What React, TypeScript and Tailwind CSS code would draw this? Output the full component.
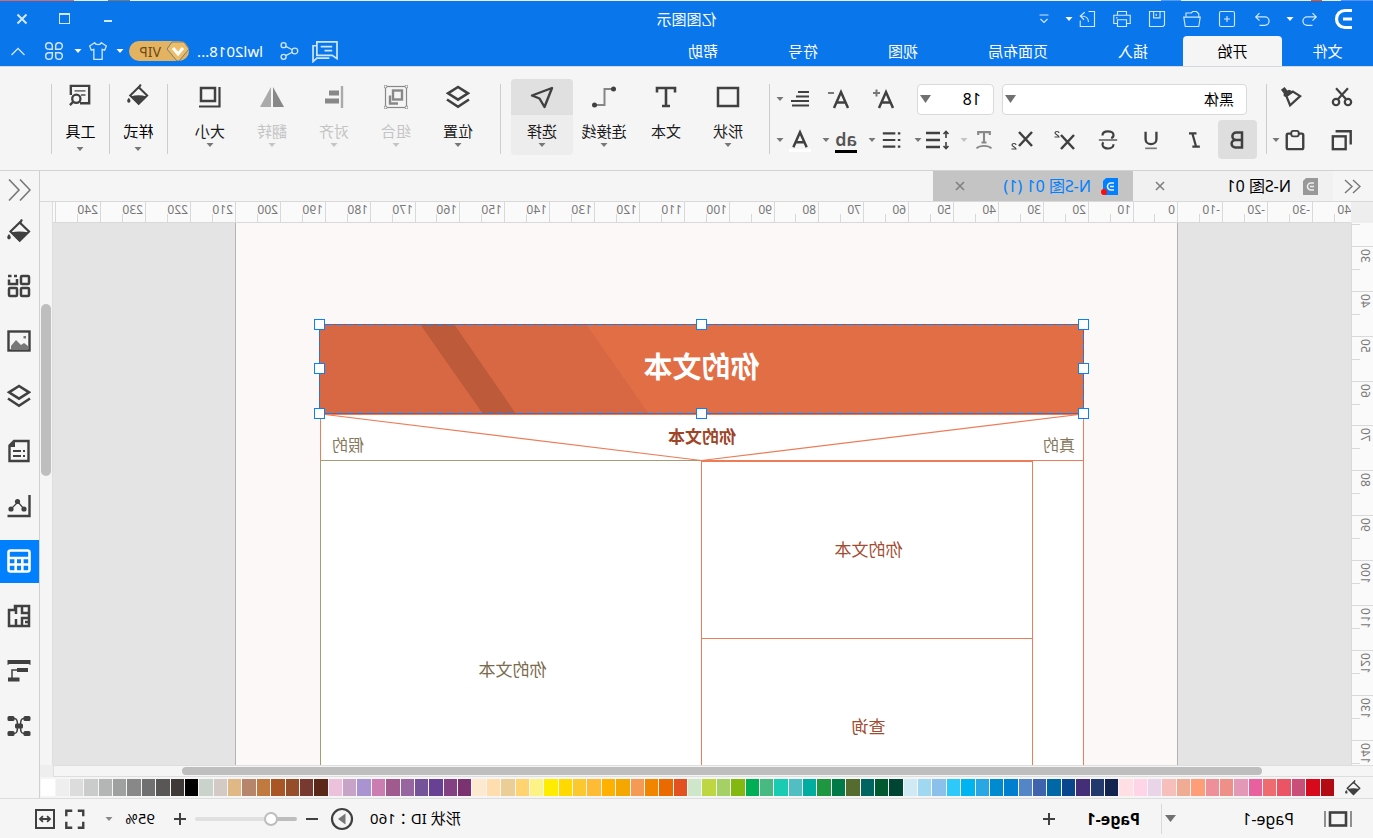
import type { ReactNode } from 'react'
import clsx from 'clsx'

type IconProps = {
  size?: number
  className?: string
  children: ReactNode
}

function Icon({ size = 24, className, children }: IconProps) {
  return (
    <svg
      width={size}
      height={size}
      viewBox="0 0 24 24"
      fill="none"
      stroke="currentColor"
      strokeWidth="2"
      className={clsx('shrink-0', className)}
      aria-hidden="true"
    >
      {children}
    </svg>
  )
}

function Caret({ className }: { className?: string }) {
  return (
    <svg width="8" height="4" viewBox="0 0 8 4" className={clsx('shrink-0', className)} aria-hidden="true">
      <path d="M0.500 0h7L4 4z" fill="currentColor" />
    </svg>
  )
}

const bucket = (
  <>
    <path d="M11.300 3.500 20.500 12.500l-9.200 9.200L2 12.500z" strokeWidth="2.200" />
    <path d="M2.500 13.500c6-1.500 12-1.500 17.500 0l-8.700 9z" fill="currentColor" stroke="none" />
    <path d="M11.500 5 9 0.500" strokeWidth="2.200" />
    <path d="M22 15c1.200 1.600 1.800 2.600 1.800 3.600a1.800 1.800 0 0 1-3.600 0c0-1 .6-2 1.800-3.600z" fill="currentColor" stroke="none" />
  </>
)

const layers = (
  <>
    <path d="m12 2 10 6.300-10 6.300L2 8.300z" strokeWidth="2.600" />
    <path d="m1 14.500 11 7.300 11-7.300" strokeWidth="2.600" />
  </>
)

const quickActions = [
  { label: '重做', icon: <path d="M4.500 9.500h11a5 5 0 0 1 0 10H9M9 5 4.500 9.500 9 14" />, flip: true },
  { label: '新建', icon: <><rect x="2" y="2" width="20" height="20" rx="2" /><path d="M12 8v8M8 12h8" /></> },
  { label: '打开', icon: <><path d="M3 10V5l3-3h5l2 2h7v5" /><path d="M1 9.500h22l-2 12.500H3z" /></> },
  { label: '保存', icon: <><path d="M2 2h20v20H4l-2-2z" /><path d="M8 2v8.500h8.500V2M13 5v3" /></> },
  { label: '打印', icon: <><path d="M6 7V2h12v5M6 18H1V7h22v11h-5" /><path d="M6 13h12v9H6zM18 10.500h2" /></> },
  { label: '导出', icon: <><path d="M10 2H2v20h19v-8" /><path d="M10 16c0-5 4-8 10-8M15 3l6 5-5 5" /></> },
]

const menuTabs = ['文件', '开始', '插入', '页面布局', '视图', '符号', '帮助']

type Tool = {
  label: string
  icon: ReactNode
  caret?: boolean
  disabled?: boolean
  active?: boolean
}

const drawTools: Tool[] = [
  { label: '形状', icon: <rect x="2" y="3" width="20" height="18" strokeWidth="2.500" />, caret: true },
  { label: '文本', icon: <path d="M3 7.500V3h18v4.500M12 3v18M8 21h8" strokeWidth="2.600" /> },
  {
    label: '连接线',
    icon: (
      <>
        <path d="M3 4h8.500v16H20" stroke="#858585" strokeWidth="2" />
        <circle cx="2.500" cy="4" r="2.500" fill="currentColor" stroke="none" />
        <circle cx="21.500" cy="20" r="2.500" fill="currentColor" stroke="none" />
      </>
    ),
    caret: true,
  },
  { label: '选择', icon: <path d="m2 3 20 7.500-7.500 3L9.500 22z" strokeWidth="2.400" strokeLinejoin="round" />, caret: true, active: true },
]

const arrangeTools: Tool[] = [
  { label: '位置', icon: layers, caret: true },
  {
    label: '组合',
    icon: (
      <>
        <rect x="1.500" y="1.500" width="21" height="21" strokeWidth="1.200" />
        <rect x="6" y="5.500" width="9" height="9" strokeWidth="2.400" />
        <path d="M18 10.500v8h-8" strokeWidth="2.400" />
        <g fill="#f5f5f5" strokeWidth="1">
          <circle cx="1.500" cy="1.500" r="1.500" />
          <circle cx="22.500" cy="1.500" r="1.500" />
          <circle cx="1.500" cy="22.500" r="1.500" />
          <circle cx="22.500" cy="22.500" r="1.500" />
        </g>
      </>
    ),
    caret: true,
    disabled: true,
  },
  {
    label: '对齐',
    icon: (
      <>
        <path d="M4 1v22" stroke="#aaa" strokeWidth="2.400" />
        <path d="M7 8h10M7 16h14" strokeWidth="5" />
      </>
    ),
    caret: true,
    disabled: true,
  },
  {
    label: '翻转',
    icon: (
      <>
        <path d="M11 2v20H0z" fill="currentColor" stroke="none" />
        <path d="M13 2v20h11z" fill="#aaa" stroke="none" />
      </>
    ),
    caret: true,
    disabled: true,
  },
  {
    label: '大小',
    icon: (
      <>
        <rect x="7" y="3" width="14" height="13" strokeWidth="2.500" />
        <path d="M2.500 2v19.500H23" strokeWidth="2.200" />
      </>
    ),
    caret: true,
  },
]

const sidebarIcons: { label: string; icon: ReactNode; active?: boolean }[] = [
  { label: '填充', icon: bucket },
  {
    label: '符号库',
    icon: (
      <g strokeWidth="2.500">
        <rect x="2" y="2" width="8" height="8" rx="1" />
        <path d="M14 2h3M19.500 2H23M22 5.500V10h-8V5" />
        <rect x="2" y="14" width="8" height="8" rx="1" />
        <rect x="14" y="14" width="8" height="8" rx="1" />
      </g>
    ),
  },
  {
    label: '图片',
    icon: (
      <>
        <rect x="1.500" y="2.500" width="21" height="19" strokeWidth="2.400" />
        <path d="M3 20v-3l4-3 3 2 5-5 5 6v3z" fill="#777" stroke="none" />
        <rect x="5" y="7" width="2.500" height="2.500" fill="#777" stroke="none" />
      </>
    ),
  },
  { label: '图层', icon: layers },
  {
    label: '注释',
    icon: (
      <>
        <path d="M2.500 2H17l4.500 4.500V22h-19z" strokeWidth="2.400" />
        <path d="M16 2v6h6z" fill="currentColor" stroke="none" />
        <path d="M6 12h2M10 12h8M6 17h2M10 17h8" />
      </>
    ),
  },
  {
    label: '图表',
    icon: (
      <>
        <path d="M1.500 1v21h22" strokeWidth="2.400" />
        <path d="m7 15 6-7 7 7" strokeWidth="1.200" />
        <g fill="currentColor" stroke="none">
          <circle cx="7" cy="15" r="2.600" />
          <circle cx="13.500" cy="7.500" r="2.600" />
          <circle cx="20" cy="15" r="2.600" />
        </g>
      </>
    ),
  },
  {
    label: '表格',
    icon: (
      <>
        <rect x="1.500" y="1.500" width="21" height="21" rx="2" strokeWidth="2.600" />
        <path d="M2 9h20M2 15.500h20M8.700 9v13M15.300 9v13" strokeWidth="2.600" />
      </>
    ),
    active: true,
  },
  {
    label: '平面图',
    icon: <path d="M2 2h14v4h6v16H2zM9 2v7H2M2 14h7v8M6 18H2M15 22v-7M15 2v8" strokeWidth="2.500" />,
  },
  {
    label: '甘特图',
    icon: (
      <>
        <path d="M0.500 1h23v5l-2-1h-19l-2 1z" fill="currentColor" stroke="none" />
        <path d="M3 9h11v4H3zM11.500 18.500H23v4H11.500z" fill="currentColor" stroke="none" />
        <path d="M13 11h6v8" strokeWidth="1.500" />
      </>
    ),
  },
  {
    label: '思维导图',
    icon: (
      <>
        <g fill="currentColor" stroke="none">
          <rect x="0.500" y="2" width="7" height="5" rx="1.500" />
          <rect x="16.500" y="2" width="7" height="5" rx="1.500" />
          <rect x="0.500" y="17" width="7" height="5" rx="1.500" />
          <rect x="16.500" y="17" width="7" height="5" rx="1.500" />
          <rect x="8" y="9.500" width="8" height="5" rx="1.500" />
        </g>
        <path d="M7 4.500c3 0 3.500 2 3.500 7.500S10 19.500 7 19.500M17 4.500c-3 0-3.500 2-3.500 7.500s.5 7.500 3.500 7.500" strokeWidth="1.500" />
      </>
    ),
  },
]

const palette = [
  '#b30a14', '#d70a1c', '#c94f78', '#ea5464', '#ee6c70', '#e8609e', '#e298b6', '#ef9088', '#ef8f99', '#ff9d78',
  '#efab94', '#f6bfbb', '#ead5e8', '#ffd4e6', '#ffdfe4', '#12234f', '#22396e', '#452e78', '#09468d', '#0068a6',
  '#4063ae', '#5385c7', '#007fd0', '#008bd0', '#2ba6e4', '#00b3f1', '#2dc9fb', '#8bc0ea', '#9fd8f0', '#cfeaf5',
  '#004533', '#00592f', '#006560', '#556b2f', '#007b48', '#1f9640', '#00ada0', '#50bec2', '#1acbb4', '#48ba81',
  '#00ae55', '#82b810', '#a4d065', '#bfd643', '#cee7cb', '#e2511f', '#eb6a00', '#f28500', '#f49a55', '#f3a700',
  '#ffb000', '#ffbb33', '#fbc82f', '#ffd900', '#ffec00', '#fdf286', '#ffd470', '#ebcd96', '#ffddac', '#fde8d0',
  '#7a3270', '#834083', '#684195', '#765299', '#9765a0', '#a05a8d', '#cb7cb0', '#a993d0', '#c8a3c8', '#ecc1db',
  '#5b2719', '#783a30', '#964d29', '#a95526', '#c0793f', '#b5866c', '#dfb886', '#d4cac5', '#cad3cb', '#000000',
  '#3e3837', '#595656', '#707070', '#888888', '#9fa0a0', '#b4b5b5', '#cacccc', '#dcdcdc', '#eeeeee', '#ffffff',
]

// one ruler step is 10 units of the drawing at 95% zoom
const STEP = 44.88
const stepSize = (i: number) => Math.round((i + 1) * STEP) - Math.round(i * STEP)

const horizontalMarks = Array.from({ length: 30 }, (_, i) => (i - 4) * 10)
const verticalMarks = Array.from({ length: 13 }, (_, i) => (i + 2) * 10)

function HorizontalRuler() {
  return (
    <div className="flex min-w-0 overflow-hidden border-b border-[#d9d9d9] bg-[#fafafa]">
      <div className="-ml-[7px] flex">
        {horizontalMarks.map((mark, i) => (
          <div key={mark} className="flex shrink-0 border-l border-[#d9d9d9]" style={{ width: stepSize(i) }}>
            <span className="w-[22px] whitespace-nowrap pl-0.5 text-[12px] leading-4 text-[#777]">{mark}</span>
            <span className="mt-3 border-l border-[#d9d9d9]" />
          </div>
        ))}
      </div>
    </div>
  )
}

function VerticalRuler() {
  return (
    <div className="min-h-0 overflow-hidden border-r border-[#d9d9d9] bg-[#fafafa]">
      <div className="-mt-[22px]">
        {verticalMarks.map((mark, i) => (
          <div key={mark} className="border-t border-[#d9d9d9]" style={{ height: stepSize(i) }}>
            <div className="relative h-[22px]">
              <span className="absolute left-0 top-0.5 rotate-180 text-[12px] leading-4 text-[#777] [writing-mode:vertical-rl]">
                {mark}
              </span>
            </div>
            <div className="ml-[13px] border-t border-[#d9d9d9]" />
          </div>
        ))}
      </div>
    </div>
  )
}

function BigTool({ label, icon, caret, disabled, active }: Tool) {
  return (
    <button
      type="button"
      disabled={disabled}
      className={clsx(
        'flex h-[76px] w-[62px] shrink-0 flex-col items-center rounded-sm',
        active && 'bg-[#ededed]',
        disabled ? 'text-[#888]' : 'text-[#404040]',
      )}
    >
      <span className={clsx('flex h-9 w-full items-center justify-center rounded-t-sm', active && 'bg-[#e0e0e0]')}>
        <Icon>{icon}</Icon>
      </span>
      <span className={clsx('mt-1.5 text-[15px] leading-5', disabled ? 'text-[#c4c4c4]' : 'text-[#1a1a1a]')}>{label}</span>
      {caret ? <Caret className={clsx('mt-0.5', disabled ? 'text-[#c4c4c4]' : 'text-[#777]')} /> : null}
    </button>
  )
}

function SideTool({ label, children }: { label: string; children: ReactNode }) {
  return (
    <button type="button" className="flex h-[76px] w-[57px] shrink-0 flex-col items-center text-[#404040]">
      <span className="flex h-8 items-center">
        <Icon size={22}>{children}</Icon>
      </span>
      <span className="mt-2.5 text-[15px] leading-5 text-black">{label}</span>
      <Caret className="mt-1.5 text-[#777]" />
    </button>
  )
}

function Divider() {
  return <span className="mt-[5px] h-[70px] w-px shrink-0 bg-[#cdcdcd]" />
}

function FontButton({ label, className, children }: { label: string; className?: string; children: ReactNode }) {
  return (
    <button type="button" aria-label={label} className={clsx('flex w-6 shrink-0 items-center justify-center text-[#404040]', className)}>
      {children}
    </button>
  )
}

function TitleBar() {
  return (
    <div className="relative flex h-[35px] items-center text-[#d3e7fd]">
      <svg width="20" height="22" viewBox="0 0 20 22" className="ml-[19px]" aria-hidden="true">
        <path d="M2 2.500h7a8.500 8.500 0 0 0 0 0a8.500 8.500 0 0 1 0 17H2M2 11h9" fill="none" stroke="#fff" strokeWidth="3.200" />
      </svg>
      <button type="button" aria-label="撤销" className="ml-[15px] flex w-[18px] justify-center">
        <Icon size={20} className="[stroke-width:1.500]"><path d="M4.500 9.500h11a5 5 0 0 1 0 10H9M9 5 4.500 9.500 9 14" /></Icon>
      </button>
      <Caret className="ml-[7px] mr-1.5 text-white" />
      {quickActions.map((action) => (
        <button key={action.label} type="button" aria-label={action.label} className="flex w-[35px] justify-center">
          <Icon size={action.flip ? 20 : 18} className={clsx('[stroke-width:1.500]', action.flip && '-scale-x-100')}>{action.icon}</Icon>
        </button>
      ))}
      <Caret className="-ml-[3px] text-white" />
      <svg width="10" height="10" viewBox="0 0 10 10" className="ml-4" fill="none" stroke="currentColor" aria-hidden="true">
        <path d="M0.500 1h9M1.500 5 5 8.500 8.500 5" strokeWidth="1.200" />
      </svg>
      <h1 className="pointer-events-none absolute inset-x-0 text-center text-[15px] leading-5 text-white">亿图图示</h1>
      <div className="ml-auto flex pr-px">
        <button type="button" aria-label="最小化" className="flex h-8 w-[43px] items-center justify-center">
          <span className="mt-1 h-[2px] w-2 bg-current" />
        </button>
        <button type="button" aria-label="最大化" className="flex h-8 w-[44px] items-center justify-center">
          <span className="h-[11px] w-[11px] border border-t-2 border-current" />
        </button>
        <button type="button" aria-label="关闭" className="flex h-8 w-[42px] items-center justify-center">
          <Icon size={12}><path d="m3 3 18 18M21 3 3 21" strokeWidth="4" /></Icon>
        </button>
      </div>
    </div>
  )
}

function MenuBar() {
  return (
    <div className="flex h-[30px] items-stretch text-[15px] text-white">
      <nav className="flex">
        {menuTabs.map((tab, i) => (
          <a
            key={tab}
            href="#"
            className={clsx(
              'flex items-center justify-center whitespace-nowrap',
              i === 0 ? 'w-[91px]' : i === 1 ? 'w-[99px] rounded-t-sm bg-[#f5f5f5] text-black' : 'px-[35px]',
            )}
          >
            {tab}
          </a>
        ))}
      </nav>
      <div className="ml-auto flex items-center text-[#cfe5fd]">
        <button type="button" aria-label="评论">
          <svg width="27" height="23" viewBox="0 0 28 24" fill="none" stroke="currentColor" strokeWidth="1.800" aria-hidden="true">
            <path d="M24 6h3v16.500l-4-3.500H10" />
            <path d="M2 2h21v14H7l-5 3.500z" />
            <path d="M7 7h12M7 11h8" />
          </svg>
        </button>
        <button type="button" aria-label="分享" className="ml-[13px]">
          <Icon size={20} className="[stroke-width:1.600]">
            <circle cx="5" cy="12" r="3.500" />
            <circle cx="18.500" cy="5" r="3" />
            <circle cx="18.500" cy="19" r="3" />
            <path d="m8 10.500 8-4M8 13.500l8 4" />
          </Icon>
        </button>
        <span className="ml-4 w-[68px] text-[15px] text-white">lwl2018...</span>
        <span className="ml-1.5 flex h-5 w-[60px] items-center rounded-full bg-[#e3b362] text-[14px] text-[#6b4a14]">
          <svg width="24" height="20" viewBox="0 0 24 20" aria-hidden="true">
            <path d="M5 1h12l5 7-10 12h-2L0 8z" fill="#edbd68" stroke="#6f7f8c" strokeWidth="1" />
            <path d="m6 7 5 6 5-6" fill="none" stroke="#fff" strokeWidth="3" />
          </svg>
          <span className="ml-1">VIP</span>
        </span>
        <Caret className="ml-[5px] text-white" />
        <button type="button" aria-label="皮肤" className="ml-2">
          <Icon size={20} className="[stroke-width:1.600]">
            <path d="M8 2c1 3 7 3 8 0l6 4-2 5-3-1v12H7V10l-3 1-2-5z" />
          </Icon>
        </button>
        <Caret className="ml-1.5 text-white" />
        <button type="button" aria-label="应用" className="ml-2.5">
          <Icon size={20} className="[stroke-width:1.800]">
            <path d="M10 10H6a4 4 0 1 1 4-4zM14 10V6a4 4 0 1 1 4 4zM10 14v4a4 4 0 1 1-4-4zM14 14h4a4 4 0 1 1-4 4z" />
          </Icon>
        </button>
        <button type="button" aria-label="收起功能区" className="ml-[19px] mr-[11px]">
          <svg width="14" height="9" viewBox="0 0 14 9" fill="none" stroke="currentColor" strokeWidth="1.300" aria-hidden="true">
            <path d="m0.500 8 6.500-6.500L13.500 8" />
          </svg>
        </button>
      </div>
    </div>
  )
}

function FontGroup() {
  return (
    <div className="flex shrink-0 flex-col pr-1.5">
      <div className="flex h-10 items-center pl-[19px]">
        <span className="relative flex">
          <select aria-label="字体" className="h-[31px] w-[245px] appearance-none rounded-sm border border-[#d9d9d9] bg-white px-3 text-[15px] leading-5 text-black">
            <option>黑体</option>
          </select>
          <svg width="11" height="8" viewBox="0 0 11 8" className="pointer-events-none absolute right-[3px] top-[11px]" aria-hidden="true">
            <path d="M0 0h11L5.500 8z" fill="#707070" />
          </svg>
        </span>
        <span className="relative ml-2 flex">
          <select aria-label="字号" className="h-[31px] w-[77px] appearance-none rounded-sm border border-[#d9d9d9] bg-white px-3 text-[16px] leading-5 text-black">
            <option>18</option>
          </select>
          <svg width="11" height="8" viewBox="0 0 11 8" className="pointer-events-none absolute right-[3px] top-[11px]" aria-hidden="true">
            <path d="M0 0h11L5.500 8z" fill="#707070" />
          </svg>
        </span>
        <FontButton label="增大字号" className="ml-[21px]">
          <Icon>
            <path d="m3 21 7-16 7 16M5.500 15.500h9" strokeWidth="2.500" />
            <path d="M16 6h7M19.500 2.500v7" stroke="#777" />
          </Icon>
        </FontButton>
        <FontButton label="减小字号" className="ml-[21px]">
          <Icon>
            <path d="m3 21 7-16 7 16M5.500 15.500h9" strokeWidth="2.500" />
            <path d="M17 6h6" stroke="#777" />
          </Icon>
        </FontButton>
        <FontButton label="对齐方式" className="ml-[15px]">
          <Icon><path d="M3 5h11M3 9.500h13M3 14h18M3 18.500h17" strokeWidth="2.200" /></Icon>
        </FontButton>
        <Caret className="ml-1 text-[#777]" />
      </div>
      <div className="flex h-[41px] items-center pl-[9px]">
        <button type="button" aria-label="加粗" className="flex h-[39px] w-[39px] items-center justify-center rounded-sm bg-[#dedede] text-[#404040]">
          <Icon size={20}><path d="M6 3h7a4.500 4.500 0 0 1 0 9H6zM6 12h8a4.500 4.500 0 0 1 0 9H6z" strokeWidth="3" /></Icon>
        </button>
        <FontButton label="斜体" className="ml-3"><Icon size={20}><path d="M9 4h9M5 20h9M14 4l-4.500 16" strokeWidth="2.600" /></Icon></FontButton>
        <FontButton label="下划线" className="ml-[19px]">
          <Icon size={20}>
            <path d="M5.500 2v9a6.500 6 0 0 0 13 0V2" strokeWidth="2.800" />
            <path d="M5 22h14" stroke="#777" />
          </Icon>
        </FontButton>
        <FontButton label="删除线" className="ml-[19px]">
          <Icon size={22}>
            <path d="M18 7c0-6-12-5.500-12-.5 0 2 1 3 2.500 3.500M6 16.500c0 6.500 12 6 12 .5 0-1.500-.5-2-1-2.500" strokeWidth="2.400" />
            <path d="M2 12h20" stroke="#777" />
          </Icon>
        </FontButton>
        <FontButton label="上标" className="ml-[19px]">
          <Icon>
            <path d="m3 7 13 14M16 7 3 21" strokeWidth="2.500" />
            <path d="M18 5c0-2 4-2 4 0 0 1.500-4 2-4 4h4.500" strokeWidth="1.200" />
          </Icon>
        </FontButton>
        <FontButton label="下标" className="ml-[19px]">
          <Icon>
            <path d="m2 4 13 14M15 4 2 18" strokeWidth="2.500" />
            <path d="M18 17c0-2 4-2 4 0 0 1.500-4 2-4 4h4.500" strokeWidth="1.200" />
          </Icon>
        </FontButton>
        <FontButton label="文字效果" className="ml-3.5">
          <Icon size={20} className="text-[#888]">
            <path d="M5 6V2.500h14V6M12 2.500V15M9 15h6" strokeWidth="2.500" />
            <path d="M3 22c4-4 14-4 18 0" />
          </Icon>
        </FontButton>
        <Caret className="ml-1 text-[#c4c4c4]" />
        <FontButton label="行距" className="ml-2.5">
          <Icon>
            <path d="M10 5h14M10 12h14M10 19h14" strokeWidth="2.500" />
            <path d="M4 3v7M4 14v7M1.500 6 4 3.500 6.500 6M1.500 18 4 20.500 6.500 18" strokeWidth="1.600" />
          </Icon>
        </FontButton>
        <Caret className="ml-1 text-[#777]" />
        <FontButton label="项目符号" className="ml-2.5">
          <Icon size={20}><path d="M2 4h3M2 12h3M2 20h3M8 4h15M8 12h15M8 20h15" strokeWidth="2.600" /></Icon>
        </FontButton>
        <Caret className="ml-1 text-[#777]" />
        <button type="button" aria-label="突出显示" className="ml-2.5 flex w-6 flex-col items-center text-[#555]">
          <span className="mt-1 text-[18px] font-semibold leading-[18px]">ab</span>
          <span className="mt-0.5 h-[3px] w-[22px] bg-black" />
        </button>
        <Caret className="ml-1 text-[#777]" />
        <button type="button" aria-label="字体颜色" className="ml-2.5 flex w-6 flex-col items-center pt-0.5 text-[#404040]">
          <Icon size={20}><path d="m4 22 8-18 8 18M7 16h10" strokeWidth="3" /></Icon>
          <span className="h-[3px] w-[22px] bg-white" />
        </button>
        <Caret className="ml-1 text-[#777]" />
      </div>
    </div>
  )
}

function Ribbon() {
  return (
    <div className="flex h-[104px] shrink-0 items-start overflow-hidden border-b border-[#d2d2d2] pt-3">
      <div className="flex w-[106px] shrink-0 flex-col pl-5 text-[#404040]">
        <div className="flex h-9 items-center">
          <button type="button" aria-label="剪切">
            <Icon size={22}>
              <circle cx="5.500" cy="17.500" r="3.500" strokeWidth="2.400" />
              <circle cx="18.500" cy="17.500" r="3.500" strokeWidth="2.400" />
              <path d="m7.500 14.500 11-12M16.500 14.500l-11-12" strokeWidth="2.400" />
            </Icon>
          </button>
          <button type="button" aria-label="格式刷" className="ml-[29px]">
            <Icon size={22}>
              <path d="M2 11 10 6l7 5-4 10z" strokeWidth="2.400" />
              <path d="m10 6 4-2 2 1 3-4 4 3-3 4v3l-2 1z" fill="currentColor" stroke="none" />
            </Icon>
          </button>
        </div>
        <div className="mt-1 flex h-[41px] items-center">
          <button type="button" aria-label="复制">
            <Icon size={22}>
              <rect x="7" y="7" width="14" height="14" strokeWidth="2.600" transform="translate(1 1)" />
              <path d="M2.500 17V2.500H19" strokeWidth="2.600" />
            </Icon>
          </button>
          <button type="button" aria-label="粘贴" className="ml-[25px]">
            <Icon size={22}>
              <rect x="3" y="5" width="18" height="17" rx="1.500" strokeWidth="2.600" />
              <rect x="8" y="2" width="8" height="6" rx="2" fill="#f5f5f5" strokeWidth="2" />
            </Icon>
          </button>
          <Caret className="ml-1 text-[#777]" />
        </div>
      </div>
      <Divider />
      <FontGroup />
      <Divider />
      <div className="mx-2.5 flex">
        {drawTools.map((tool) => <BigTool key={tool.label} {...tool} />)}
      </div>
      <Divider />
      <div className="mx-[11px] flex">
        {arrangeTools.map((tool) => <BigTool key={tool.label} {...tool} />)}
      </div>
      <Divider />
      <SideTool label="样式">{bucket}</SideTool>
      <Divider />
      <SideTool label="工具">
        <path d="M12 21H2V2h20v10" strokeWidth="2.600" />
        <path d="M6 7.500h12M6 12h5" stroke="#777" />
        <circle cx="16" cy="16" r="4.500" strokeWidth="2.500" />
        <path d="m19 19 4 4" strokeWidth="2.500" />
      </SideTool>
      <Divider />
    </div>
  )
}

function FileIcon({ className }: { className?: string }) {
  return (
    <svg width="15" height="17" viewBox="0 0 15 17" className={className} aria-hidden="true">
      <path d="M0 0h12l3 3v14H0z" fill="currentColor" />
      <path d="M4 5h3a3.500 3.500 0 0 1 0 7H4M4 8.500h4" fill="none" stroke="#eee" strokeWidth="1.600" />
    </svg>
  )
}

function CloseTab() {
  return (
    <button type="button" aria-label="关闭标签" className="ml-auto mr-[22px]">
      <svg width="10" height="10" viewBox="0 0 10 10" fill="none" stroke="#808080" strokeWidth="1.600" aria-hidden="true">
        <path d="m1 1 8 8M9 1 1 9" />
      </svg>
    </button>
  )
}

function DocumentTabs() {
  return (
    <div className="flex h-[30px] shrink-0 text-[16px] leading-5">
      <button type="button" aria-label="展开" className="flex w-10 items-center justify-center text-[#777]">
        <svg width="17" height="15" viewBox="0 0 17 15" fill="none" stroke="currentColor" strokeWidth="1.400" aria-hidden="true">
          <path d="M8 1 1 7.500 8 14M16 1 9 7.500 16 14" />
        </svg>
      </button>
      <div className="flex w-[200px] items-center bg-[#f1f1f1] pl-[15px] text-black">
        <FileIcon className="text-[#999]" />
        <a href="#" className="ml-3">N-S图 01</a>
        <CloseTab />
      </div>
      <div className="flex w-[200px] items-center bg-[#c4c4c4] pl-[15px] text-[#007fff]">
        <span className="relative">
          <FileIcon />
          <span className="absolute -right-0.5 bottom-0 h-1.5 w-1.5 rounded-full bg-[#fb0d0d]" />
        </span>
        <a href="#" className="ml-3">N-S图 01 (1)</a>
        <CloseTab />
      </div>
    </div>
  )
}

const handles = [
  'left-[88px] top-[96px]',
  'left-[470px] top-[96px]',
  'left-[852px] top-[96px]',
  'left-[88px] top-[140px]',
  'left-[852px] top-[140px]',
  'left-[88px] top-[185px]',
  'left-[470px] top-[185px]',
  'left-[852px] top-[185px]',
]

const shapeText = 'absolute flex items-center justify-center'

function Canvas() {
  return (
    <div className="relative min-h-0 min-w-0 overflow-hidden bg-[#e4e4e4]">
      <div className="absolute inset-y-0 left-[173px] w-[943px] border-x border-[#b3b3b3] bg-[#fcf8f7]">
        <svg width="943" height="760" className="absolute -left-px top-0" fill="none" aria-hidden="true">
          <rect x="94.500" y="191.500" width="763" height="569" fill="#fff" stroke="#ee7c58" />
          <path d="M477 237.500h381M857.500 237v540" stroke="#a89b75" />
          <path d="M94 237.500h382M476.500 237v540M145.500 238.500h331M145.500 238v540M145 415.500h331" stroke="#ee7c58" />
          <path d="m95 191 381.500 46.500L857 191" stroke="#ee7c58" strokeWidth="1.200" />
          <path d="M94 101h765v90H94z" fill="#e26e46" />
          <path d="M592 101h267v90H529z" fill="#d86843" />
          <path d="M724 101h34l-63 90h-33z" fill="#bc5a39" />
          <path d="M94.500 101.500h764v89h-764z" stroke="#b04f2d" strokeWidth="1" />
          <path d="M94.500 101.500h764v89h-764z" stroke="#0a80ff" strokeWidth="1" strokeDasharray="7 3" />
        </svg>
        <span className={`${shapeText} left-[93px] top-[100px] h-[88px] w-[765px] text-[29px] font-bold text-white`}>你的文本</span>
        <span className={`${shapeText} left-[375px] top-[198px] h-8 w-[200px] text-[17px] font-bold text-[#9e4427]`}>你的文本</span>
        <span className={`${shapeText} left-[102px] top-[206px] h-8 text-[16px] text-[#85765a]`}>真的</span>
        <span className={`${shapeText} left-[813px] top-[206px] h-8 text-[16px] text-[#85765a]`}>假的</span>
        <span className={`${shapeText} left-[143px] top-[238px] h-[177px] w-[331px] text-[17px] text-[#a14c30]`}>你的文本</span>
        <span className={`${shapeText} left-[143px] top-[415px] h-[177px] w-[331px] text-[17px] text-[#a14c30]`}>查询</span>
        <span className={`${shapeText} left-[474px] top-[238px] h-[418px] w-[381px] text-[17px] text-[#796a4c]`}>你的文本</span>
        {handles.map((position) => (
          <span key={position} className={clsx('absolute h-[11px] w-[11px] border border-[#0a80ff] bg-white', position)} />
        ))}
      </div>
    </div>
  )
}

function Workspace() {
  return (
    <div className="grid min-h-0 flex-1 grid-cols-[22px_minmax(0,1fr)_13px] grid-rows-[21px_minmax(0,1fr)_12px] border-t border-[#d9d9d9]">
      <div className="bg-[#eee]" />
      <HorizontalRuler />
      <div className="row-span-2 border-l border-[#dedede] px-px">
        <div className="mt-[102px] h-[172px] rounded-full bg-[#bebebe]" />
      </div>
      <VerticalRuler />
      <Canvas />
      <div className="col-span-2 border-y border-r border-[#dedede] pl-[111px] pr-32 pt-px">
        <div className="h-2 rounded-full bg-[#bebebe]" />
      </div>
      <div className="bg-[#eee]" />
    </div>
  )
}

function Palette() {
  return (
    <div className="flex h-[21px] shrink-0 items-center text-[#404040]">
      <span className="flex w-[39px] shrink-0 justify-center">
        <Icon size={16}>{bucket}</Icon>
      </span>
      <div className="flex h-[17px] min-w-0 flex-1 gap-px pr-px">
        {palette.map((color) => (
          <button key={color} type="button" aria-label={color} className="min-w-0 flex-1" style={{ backgroundColor: color }} />
        ))}
      </div>
    </div>
  )
}

function Sidebar() {
  return (
    <aside className="flex w-10 shrink-0 flex-col overflow-hidden border-l border-[#d0d0d0]">
      <button type="button" aria-label="收起面板" className="flex h-[33px] shrink-0 items-center justify-center text-[#777]">
        <svg width="23" height="22" viewBox="0 0 23 22" fill="none" stroke="currentColor" strokeWidth="1.600" className="mt-1" aria-hidden="true">
          <path d="M11 0.500 1 11l10 10.500M22 0.500 12 11l10 10.500" />
        </svg>
      </button>
      {sidebarIcons.map(({ label, icon, active }) => (
        <div key={label} className="flex h-[55px] shrink-0 items-center">
          <button
            type="button"
            aria-label={label}
            className={clsx('flex h-[43px] w-full items-center justify-center pb-0.5', active ? 'bg-[#007fff] text-white' : 'text-[#404040]')}
          >
            <Icon>{icon}</Icon>
          </button>
        </div>
      ))}
    </aside>
  )
}

function StatusBar() {
  return (
    <footer className="flex h-10 shrink-0 items-center border-t border-[#dcdcdc] text-[15px] text-black">
      <button type="button" aria-label="页面列表" className="ml-[21px] text-[#404040]">
        <svg width="28" height="16" viewBox="0 0 28 16" fill="none" stroke="currentColor" aria-hidden="true">
          <path d="M1 0v16M27 0v16" stroke="#777" strokeWidth="1.600" />
          <rect x="6" y="1.500" width="16" height="13" strokeWidth="2.600" />
        </svg>
      </button>
      <label className="relative ml-[30px] flex items-center">
        <span className="sr-only">页面</span>
        <select className="w-[130px] appearance-none bg-transparent text-[16px] leading-6">
          <option>Page-1</option>
        </select>
        <svg width="11" height="7" viewBox="0 0 11 7" className="pointer-events-none absolute right-px top-2" aria-hidden="true">
          <path d="M0 0h11L5.500 7z" fill="#707070" />
        </svg>
      </label>
      <span className="ml-0.5 h-[30px] w-px bg-[#d9d9d9]" />
      <a href="#" className="ml-[21px] text-[16px] font-bold">Page-1</a>
      <button type="button" aria-label="添加页面" className="ml-8 text-[#404040]">
        <Icon size={12}><path d="M12 0v24M0 12h24" strokeWidth="4" /></Icon>
      </button>
      <span className="ml-auto">
        形状 ID<span className="font-['Noto_Sans_CJK_TC',sans-serif]">：</span>160
      </span>
      <button type="button" aria-label="演示" className="ml-4 text-[#404040]">
        <Icon>
          <circle cx="12" cy="12" r="10" strokeWidth="2.200" />
          <path d="M8.500 6.500v11l7.500-5.500z" fill="#777" stroke="none" />
        </Icon>
      </button>
      <button type="button" aria-label="缩小" className="ml-3 text-[#404040]">
        <Icon size={12}><path d="M0 12h24" strokeWidth="4" /></Icon>
      </button>
      <input
        type="range"
        aria-label="缩放"
        min="0"
        max="100"
        defaultValue="22"
        className="ml-[9px] h-4 w-[102px] appearance-none bg-transparent [&::-webkit-slider-runnable-track]:h-1 [&::-webkit-slider-runnable-track]:rounded-full [&::-webkit-slider-runnable-track]:bg-[linear-gradient(to_right,#bdbdbd_25%,#e0e0e0_25%)] [&::-webkit-slider-thumb]:-mt-[5px] [&::-webkit-slider-thumb]:h-3.5 [&::-webkit-slider-thumb]:w-3.5 [&::-webkit-slider-thumb]:appearance-none [&::-webkit-slider-thumb]:rounded-full [&::-webkit-slider-thumb]:border-2 [&::-webkit-slider-thumb]:border-[#bdbdbd] [&::-webkit-slider-thumb]:bg-white"
      />
      <button type="button" aria-label="放大" className="ml-[9px] text-[#404040]">
        <Icon size={12}><path d="M12 0v24M0 12h24" strokeWidth="4" /></Icon>
      </button>
      <span className="ml-[19px] w-8">95%</span>
      <Caret className="ml-2.5 text-[#888]" />
      <button type="button" aria-label="全屏" className="ml-[19px] text-[#404040]">
        <Icon size={22}><path d="M3 9V3h6M15 3h6.500v6M21.500 15v6.500H15M9 21.500H3V15" strokeWidth="2.600" /></Icon>
      </button>
      <button type="button" aria-label="适合宽度" className="ml-[9px] mr-[35px] text-[#404040]">
        <Icon size={20}>
          <rect x="1.200" y="1.200" width="21.600" height="21.600" strokeWidth="2.400" />
          <path d="M6 12h12M9.500 8.500 6 12l3.500 3.500M14.500 8.500 18 12l-3.500 3.500" strokeWidth="2.200" />
        </Icon>
      </button>
    </footer>
  )
}

// the whole window is shown flipped left to right
export default function App() {
  return (
    <div className="flex h-screen -scale-x-100 flex-col overflow-hidden bg-[#f5f5f5] font-['Noto_Sans','Noto_Sans_CJK_SC',sans-serif]">
      <div className="flex h-px shrink-0 bg-[#eee]">
        <span className="w-8 bg-[#5a8fff]" />
        <span className="ml-[19px] w-[11px] bg-[#ff4a10]" />
        <span className="ml-[130px] w-5 bg-[#5a9aec]" />
        <span className="ml-auto w-[22px] bg-[#777]" />
        <span className="ml-[34px] w-[74px] bg-[#df675c]" />
      </div>
      <header className="shrink-0 border-b border-[#d5d9de] bg-[#0976eb]">
        <TitleBar />
        <MenuBar />
      </header>
      <Ribbon />
      <main className="flex min-h-0 flex-1">
        <div className="flex min-w-0 flex-1 flex-col">
          <DocumentTabs />
          <Workspace />
          <Palette />
        </div>
        <Sidebar />
      </main>
      <StatusBar />
    </div>
  )
}
